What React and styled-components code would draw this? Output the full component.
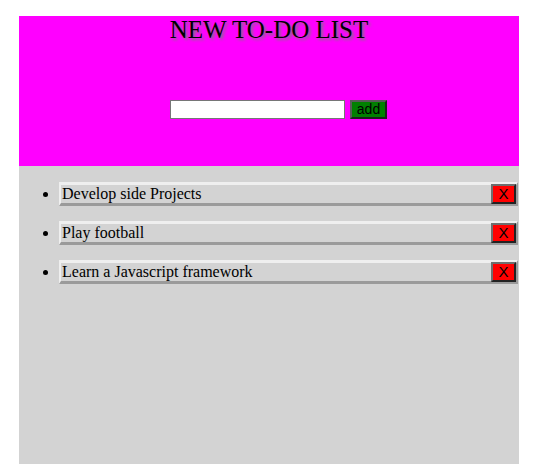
import React from "react";
import styled, { createGlobalStyle } from "styled-components";

const Global = createGlobalStyle`
  html, body { margin: 0; padding: 0; background: #fff; }
  body { padding: 16px 0 0 19px; font-family: "Liberation Serif", "Times New Roman", serif; }
`;

const Wrapper = styled.div`
  width: 500px;
  min-height: 460px;
  background: #d3d3d3;
`;

const Header = styled.header`
  height: 150px;
  background: #ff00ff;
  display: flex;
  flex-direction: column;
  align-items: center;
`;

const Title = styled.h1`
  margin: 0;
  font-size: 25px;
  font-weight: normal;
  line-height: 28px;
  color: #000;
  text-shadow: 2px 2px 3px #7a7a7a;
`;

const Form = styled.div`
  margin-top: 56px;
  padding-left: 19px;
  display: flex;
  align-items: center;
  gap: 5px;
`;

const Input = styled.input`
  box-sizing: border-box;
  width: 175px;
  height: 19px;
  border: 1px solid #767676;
  background: #fff;
  padding: 0 2px;
`;

const AddButton = styled.button`
  box-sizing: border-box;
  width: 37px;
  height: 19px;
  padding: 0;
  background: #008000;
  border: 2px solid;
  border-color: #5a5a5a #1e1e1e #1e1e1e #5a5a5a;
  font-family: "Liberation Sans", Arial, sans-serif;
  font-size: 14px;
  line-height: 15px;
  color: #000;
`;

const List = styled.ul`
  margin: 16px 0 0;
  padding: 0 1px 0 40px;
`;

const Item = styled.li`
  margin-bottom: 15px;
  font-size: 16px;
`;

const Row = styled.div`
  box-sizing: border-box;
  height: 24px;
  display: flex;
  align-items: center;
  justify-content: space-between;
  border: 3px solid;
  border-color: #efefef #9a9a9a #9a9a9a #efefef;
  border-left-width: 2px;
  border-right-width: 2px;
  padding-left: 1px;
  line-height: 18px;
`;

const DeleteButton = styled.button`
  box-sizing: border-box;
  width: 25px;
  height: 20px;
  margin: -1px 0 0;
  padding: 0;
  background: #ff0000;
  border: 2px solid;
  border-color: #6e6e6e #222 #222 #6e6e6e;
  font-family: "Liberation Sans", Arial, sans-serif;
  font-size: 15px;
  line-height: 16px;
  color: #000;
`;

const todos = ["Develop side Projects", "Play football", "Learn a Javascript framework"];

export default function App() {
  return (
    <>
      <Global />
      <Wrapper>
        <Header>
          <Title>NEW TO-DO LIST</Title>
          <Form>
            <Input type="text" />
            <AddButton>add</AddButton>
          </Form>
        </Header>
        <List>
          {todos.map((t) => (
            <Item key={t}>
              <Row>
                <span>{t}</span>
                <DeleteButton>X</DeleteButton>
              </Row>
            </Item>
          ))}
        </List>
      </Wrapper>
    </>
  );
}
